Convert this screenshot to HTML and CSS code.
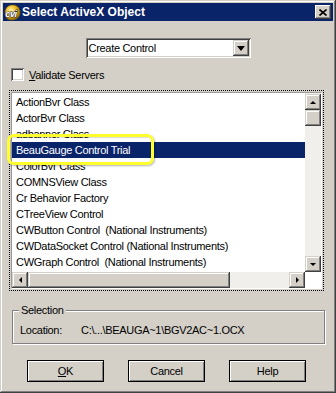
FILE: index.html
```html
<html>

<head>
  <title>Select ActiveX Object</title>
  <link rel="stylesheet" href="styles.css">
</head>

<body>

  <div class="window">
    <header class="titlebar">
      <svg class="logo" width="17" height="17" viewBox="0 0 17 17">
        <defs>
          <radialGradient id="gold" cx="40%" cy="35%" r="70%">
            <stop offset="0" stop-color="#fff4a8"/>
            <stop offset="0.5" stop-color="#eab820"/>
            <stop offset="1" stop-color="#8a6000"/>
          </radialGradient>
        </defs>
        <path d="M1 9 C1 3 5 0.5 10 1 C15 2 16.5 6 16 10 C15 15 10 16.5 6 16 C2 15 1 12 1 9 Z" fill="url(#gold)" stroke="#6b5200" stroke-width="0.6"/>
        <text x="1.2" y="12.5" font-family="Liberation Sans" font-weight="bold" font-style="italic" font-size="9" fill="#fff" stroke="#1e2248" stroke-width="0.9" paint-order="stroke">cvi</text>
      </svg>
      <span class="title">Select ActiveX Object</span>
      <button class="close">
        <svg width="8" height="7" viewBox="0 0 8 7">
          <path d="M0.5 0.5 L7.5 6.5 M7.5 0.5 L0.5 6.5" stroke="#000" stroke-width="1.6"/>
        </svg>
      </button>
    </header>

    <main class="content">
      <div class="combo">
        <span class="combo-text">Create Control</span>
        <span class="combo-btn"><i class="tri-down"></i></span>
      </div>

      <label class="check-row">
        <span class="checkbox"></span>
        <span><u>V</u>alidate Servers</span>
      </label>

      <div class="focus">
        <div class="listbox">
          <ul class="items">
            <li>ActionBvr Class</li>
            <li>ActorBvr Class</li>
            <li>adbanner Class</li>
            <li class="selected">BeauGauge Control Trial</li>
            <li>ColorBvr Class</li>
            <li>COMNSView Class</li>
            <li>Cr Behavior Factory</li>
            <li>CTreeView Control</li>
            <li>CWButton Control  (National Instruments)</li>
            <li>CWDataSocket Control (National Instruments)</li>
            <li>CWGraph Control  (National Instruments)</li>
          </ul>
          <div class="vscroll">
            <span class="sbtn"><i class="arr-up"></i></span>
            <span class="thumb-v"></span>
            <span class="track"></span>
            <span class="sbtn"><i class="arr-down"></i></span>
          </div>
          <div class="hscroll">
            <span class="sbtn"><i class="arr-left"></i></span>
            <span class="thumb-h"></span>
            <span class="track"></span>
            <span class="sbtn"><i class="arr-right"></i></span>
          </div>
          <div class="corner"></div>
        </div>
        <div class="marker"></div>
      </div>

      <fieldset class="group">
        <legend>Selection</legend>
        <div class="location">
          <span class="loc-label">Location:</span>
          <span>C:\...\BEAUGA~1\BGV2AC~1.OCX</span>
        </div>
      </fieldset>

      <div class="buttons">
        <button class="btn"><u>O</u>K</button>
        <button class="btn">Cancel</button>
        <button class="btn">Help</button>
      </div>
    </main>
  </div>

</body>

</html>
```

FILE: styles.css
```css
body {
  margin: 0;
  background: #d4d0c8;
  font-family: "Liberation Sans", Arial, sans-serif;
  font-size: 11px;
  letter-spacing: -0.3px;
  color: #000;
}

.window {
  width: 336px;
  height: 393px;
  box-sizing: border-box;
  padding: 3px;
  background: #d4d0c8;
  box-shadow: inset -1px -1px #404040, inset 1px 1px #d4d0c8,
    inset -2px -2px #808080, inset 2px 2px #fff;
  display: flex;
  flex-direction: column;
}

.titlebar {
  height: 18px;
  background: #0a246a;
  display: flex;
  align-items: center;
  padding: 0 2px 0 1px;
}

.logo {
  flex: none;
}

.title {
  flex: 1;
  margin-left: 1px;
  color: #fff;
  font-weight: bold;
  font-size: 12px;
  letter-spacing: 0;
}

.close {
  width: 16px;
  height: 14px;
  padding: 0;
  border: 0;
  background: #d4d0c8;
  box-shadow: inset -1px -1px #404040, inset 1px 1px #fff, inset -2px -2px #808080;
  display: flex;
  align-items: center;
  justify-content: center;
}

.content {
  flex: 1;
  display: flex;
  flex-direction: column;
}

/* combo box */
.combo {
  width: 165px;
  height: 20px;
  box-sizing: border-box;
  margin: 17px auto 0;
  padding: 2px;
  background: #fff;
  box-shadow: inset 1px 1px #808080, inset -1px -1px #fff,
    inset 2px 2px #404040, inset -2px -2px #d4d0c8;
  display: flex;
  align-items: stretch;
}

.combo-text {
  flex: 1;
  padding-left: 1px;
  line-height: 16px;
}

.combo-btn {
  width: 16px;
  background: #d4d0c8;
  box-shadow: inset -1px -1px #404040, inset 1px 1px #d4d0c8,
    inset -2px -2px #808080, inset 2px 2px #fff;
  display: flex;
  align-items: center;
  justify-content: center;
}

.tri-down {
  border-left: 4px solid transparent;
  border-right: 4px solid transparent;
  border-top: 5px solid #000;
  margin-top: 1px;
}

/* checkbox */
.check-row {
  display: flex;
  align-items: center;
  gap: 5px;
  margin: 10px 0 0 8px;
  height: 13px;
}

.checkbox {
  width: 13px;
  height: 13px;
  box-sizing: border-box;
  background: #fff;
  box-shadow: inset 1px 1px #808080, inset -1px -1px #fff,
    inset 2px 2px #404040, inset -2px -2px #d4d0c8;
}

/* list */
.focus {
  position: relative;
  height: 201px;
  box-sizing: border-box;
  margin: 9px 9px 0 6px;
  border: 1px dotted #000;
  padding: 1px;
}

.listbox {
  height: 100%;
  box-sizing: border-box;
  border: 1px solid;
  border-color: #9a9a9a #fff #fff #9a9a9a;
  background: #fff;
  display: grid;
  grid-template-columns: 1fr 16px;
  grid-template-rows: 1fr 16px;
  overflow: hidden;
}

.items {
  list-style: none;
  margin: 0;
  padding: 1px 0 0;
  overflow: hidden;
}

.items li {
  height: 16px;
  line-height: 16px;
  padding-left: 4px;
  white-space: pre;
}

.items .selected {
  background: #0a246a;
  color: #fff;
}

.vscroll {
  background: #f0efeb;
  display: flex;
  flex-direction: column;
  padding-top: 1px;
}

.hscroll {
  background: #f0efeb;
  display: flex;
}

.corner {
  background: #fff;
}

.track {
  flex: 1;
}

.sbtn,
.thumb-v,
.thumb-h {
  flex: none;
  width: 16px;
  height: 16px;
  box-sizing: border-box;
  background: #d4d0c8;
  box-shadow: inset -1px -1px #404040, inset 1px 1px #d4d0c8,
    inset -2px -2px #808080, inset 2px 2px #fff;
  display: flex;
  align-items: center;
  justify-content: center;
}

.thumb-h {
  width: 202px;
}

.arr-up {
  border-left: 3px solid transparent;
  border-right: 3px solid transparent;
  border-bottom: 3px solid #000;
}

.arr-down {
  border-left: 3px solid transparent;
  border-right: 3px solid transparent;
  border-top: 3px solid #000;
}

.arr-left {
  border-top: 3px solid transparent;
  border-bottom: 3px solid transparent;
  border-right: 3px solid #000;
}

.arr-right {
  border-top: 3px solid transparent;
  border-bottom: 3px solid transparent;
  border-left: 3px solid #000;
}

/* yellow callout around the selected entry */
.marker {
  position: absolute;
  left: -3px;
  top: 43px;
  width: 147px;
  height: 31px;
  box-sizing: border-box;
  border: 3px solid #ffff2e;
  border-radius: 7px;
  box-shadow: 1px 1px 2px rgba(0, 0, 0, 0.3), inset 1px 1px 1px rgba(0, 0, 0, 0.15);
}

/* selection group */
.group {
  margin: 13px 8px 0 9px;
  padding: 0 0 6px 7px;
  border: 1px solid #808080;
  box-shadow: inset 1px 1px #fff, 1px 1px #fff;
  min-inline-size: 0;
}

.group legend {
  margin-left: -1px;
  padding: 0 2px;
  line-height: 13px;
  background: #d4d0c8;
}

.location {
  margin-top: 7px;
  line-height: 13px;
  display: flex;
}

.loc-label {
  width: 61px;
}

/* buttons */
.buttons {
  display: flex;
  gap: 24px;
  margin: 16px 0 0 24px;
}

.btn {
  width: 77px;
  height: 22px;
  padding: 0;
  border: 1px solid #000;
  background: #d4d0c8;
  box-shadow: inset 1px 1px #fff, inset -1px -1px #808080;
  font: inherit;
  letter-spacing: inherit;
  color: #000;
}
```
